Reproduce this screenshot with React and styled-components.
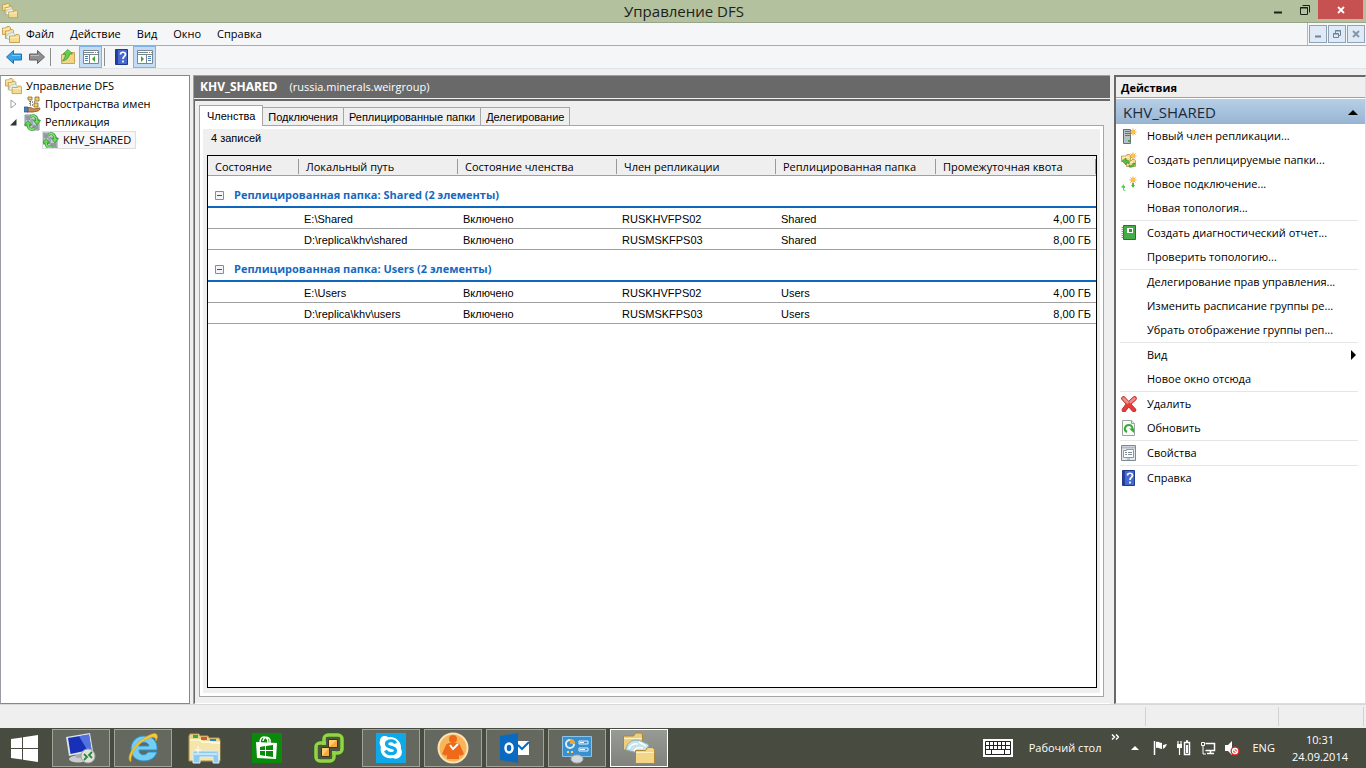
import React from 'react'
import styled, { createGlobalStyle, css } from 'styled-components';

const GlobalStyle = createGlobalStyle`
* {
  box-sizing: border-box;
}
body {
  margin: 0;
  background: #efefef;
  color: #000000;
  font-family: 'Open Sans', 'Noto Sans', sans-serif;
  font-size: 11px;
  line-height: 16px;
}
button {
  font: inherit;
  color: inherit;
  background: none;
  border: 0;
  padding: 0;
  margin: 0;
  text-align: left;
  white-space: nowrap;
}
a {
  color: inherit;
  text-decoration: none;
}
svg {
  display: block;
  flex: none;
}
`;
const Desktop = styled.div`
display: flex;
flex-direction: column;
min-height: 100vh;
`;

/* title bar */
const TitleBar = styled.header`
display: grid;
grid-template-columns: 1fr auto 1fr;
height: 23px;
padding-left: 2px;
background: #b3c19f;
border-bottom: 1px solid #98a48a;
`;
const TitleIcon = styled.div`
padding-top: 3px;
`;
const Title = styled.h1`
margin: 0;
font-size: 15px;
line-height: 22px;
font-weight: 400;
color: #1c2018;
`;
const WindowButtons = styled.div`
display: flex;
justify-content: flex-end;
padding-right: 3px;
`;
const WindowButton = styled.button`
display: flex;
justify-content: center;
align-items: center;
width: ${props => props.$close ? '45px' : '27px'};
height: 19px;
background: ${props => props.$close ? '#c75050' : 'transparent'};
`;

/* menu */
const MenuBar = styled.nav`
display: flex;
align-items: stretch;
height: 23px;
padding-left: 2px;
background: #f5f6f7;
border-bottom: 1px solid #a9abb0;
`;
const MenuIcon = styled.div`
padding: 3px 6px 0 0;
`;
const MenuItems = styled.div`
display: flex;
flex: 1;
gap: 16px;
border-right: 1px solid #b4b6ba;
`;
const ChildButtons = styled.div`
display: flex;
gap: 1px;
padding: 2px 1px;
`;
const ChildButton = styled.button`
display: flex;
align-items: center;
justify-content: center;
width: 18px;
height: 18px;
background: #dfeaf6;
border: 1px solid #8fa3b8;
`;

/* toolbar */
const ToolBar = styled.div`
display: flex;
align-items: center;
height: 23px;
padding-left: 2px;
background: #f5f6f7;
border-bottom: 1px solid #e3e4e6;
`;
const ToolButton = styled.button`
display: flex;
align-items: center;
justify-content: center;
width: 23px;
height: 22px;
background: ${props => props.$on ? '#c4dcf3' : 'transparent'};
border: 1px solid ${props => props.$on ? '#7eb4ea' : 'transparent'};
`;
const ToolSeparator = styled.div`
width: 1px;
height: 18px;
margin: 0 5px 0 2px;
background: #8e8e8e;
`;

/* panels */
const Panels = styled.main`
display: grid;
grid-template-columns: 190px minmax(0, 1fr) 252px;
gap: 3px;
flex: 1;
padding-top: 6px;
`;
const TreePane = styled.aside`
padding: 1px 0 0 4px;
background: #ffffff;
border: 1px solid #828790;
border-left-color: #9a9da3;
`;
const TreeRow = styled.div`
display: flex;
align-items: center;
height: 18px;
padding-left: ${props => props.$indent || '0'};
`;
const Expander = styled.button`
display: flex;
align-items: center;
width: 19px;
height: 18px;
padding-left: 5px;
`;
const TreeLabel = styled.button`
display: flex;
align-items: center;
gap: 4px;
height: 18px;
padding-right: 5px;
${props => props.$selected && css`
  background: #f7f7f7;
  outline: 1px solid #dedede;
  outline-offset: -1px;
`}
`;

const Center = styled.section`
display: flex;
flex-direction: column;
min-width: 0;
margin-right: 1px;
border-left: 1px solid #a0a0a0;
`;
const CenterHead = styled.div`
display: flex;
align-items: center;
gap: 12px;
height: 23px;
padding-left: 6px;
background: #696969;
border-top: 1px solid #a0a0a0;
color: #ffffff;
& > b {
  font-size: 12px;
}
`;
const CenterBody = styled.div`
display: flex;
flex-direction: column;
flex: 1;
margin-top: 1px;
padding: 4px 6px 6px 4px;
border-top: 2px solid #696969;
border-left: 1px solid #696969;
border-bottom: 1px solid #ffffff;
`;
const Tabs = styled.div`
display: flex;
align-items: flex-end;
height: 20px;
font-family: 'Liberation Sans', Arial, sans-serif;
`;
const Tab = styled.button`
position: relative;
height: ${props => props.$active ? '21px' : '18px'};
padding: 0 ${props => props.$active ? '7px' : '5px'};
border: 1px solid #a6a6a6;
border-bottom: 0;
background: ${props => props.$active ? '#ffffff' : '#efefef'};
margin: 0 0 ${props => props.$active ? '-1px' : '0'} ${props => props.$next ? '-1px' : '0'};
`;
const TabPanel = styled.div`
display: flex;
flex-direction: column;
flex: 1;
padding: 4px 4px 6px 4px;
border: 1px solid #a6a6a6;
box-shadow: inset 0 0 0 3px #ffffff;
background: #efefef;
`;
const Count = styled.div`
height: 25px;
padding-left: 7px;
font-family: 'Liberation Sans', Arial, sans-serif;
`;
const ListBox = styled.div`
flex: 1;
margin: 0 2px 2px 3px;
border: 1px solid #000000;
background: #ffffff;
`;
const Table = styled.table`
width: 100%;
table-layout: fixed;
border-collapse: separate;
border-spacing: 0;
`;
const HeadCell = styled.th`
width: ${props => props.$width || 'auto'};
height: 20px;
padding: 2px 0 0;
background: #efefef;
border-bottom: 1px solid #a0a0a0;
text-align: left;
font-weight: 400;
white-space: nowrap;
& > span {
  display: block;
  line-height: 15px;
  padding-left: 7px;
  border-right: 1px solid #9a9a9a;
}
`;
const GroupCell = styled.th`
height: 32px;
padding: 8px 0 0 7px;
border-bottom: 2px solid #0f66bd;
text-align: left;
font-weight: 700;
color: #1569bf;
`;
const GroupToggle = styled.button`
display: flex;
align-items: center;
gap: 10px;
`;
const Cell = styled.td`
height: 21px;
padding: 2px 5px 0;
border-bottom: 1px solid #a0a0a0;
font-family: 'Liberation Sans', Arial, sans-serif;
text-align: ${props => props.$right ? 'right' : 'left'};
`;

const ActionsPane = styled.aside`
background: #ffffff;
border: 1px solid #a0a0a0;
border-width: 2px 1px 1px 2px;
border-color: #696969 #dcdcdc #dcdcdc #696969;
`;
const ActionsTitle = styled.h2`
margin: 0 0 1px;
height: 21px;
padding-left: 5px;
background: #efefef;
border-bottom: 1px solid #a0a0a0;
font-size: 11px;
line-height: 21px;
font-weight: 700;
`;
const ActionsGroup = styled.button`
display: flex;
align-items: center;
justify-content: space-between;
width: 100%;
height: 25px;
padding: 0 7px;
background: linear-gradient(#b7cfe8, #98b4d3);
font-size: 15px;
color: #1b2a3b;
`;
const ActionList = styled.div`
padding: 0 7px 0 4px;
`;
const Action = styled.button`
display: grid;
grid-template-columns: 16px 1fr auto;
gap: 10px;
align-items: center;
width: 100%;
height: 24px;
padding-left: 1px;
`;
const ActionSeparator = styled.hr`
height: 1px;
margin: 0;
border: 0;
background: #e6e6e6;
`;

const StatusBar = styled.footer`
display: flex;
justify-content: flex-end;
height: 24px;
padding: 2px 2px 2px 0;
border-top: 1px solid #d8d8d8;
background: #efefef;
`;
const StatusCell = styled.div`
width: ${props => props.$width};
border-right: 1px solid #d2d2d2;
`;

/* task bar */
const TaskBar = styled.nav`
display: flex;
align-items: stretch;
height: 40px;
background: #474b40;
color: #ffffff;
`;
const StartButton = styled.button`
width: 52px;
padding-left: 11px;
`;
const TaskButtons = styled.div`
display: flex;
gap: 4px;
flex: 1;
padding: 1px 0;
`;
const TaskButton = styled.button`
display: flex;
align-items: center;
justify-content: center;
width: 58px;
border: 1px solid transparent;
${props => props.$running && css`
  background: #65685e;
  border-color: #a0a398;
`}
${props => props.$active && css`
  background: linear-gradient(#989a95, #80837c);
  border-color: #ffffff;
`}
`;
const Tray = styled.div`
display: flex;
align-items: center;
padding-right: 18px;
`;
const DesktopLink = styled.a`
margin: 0 10px 0 16px;
`;
const More = styled.button`
align-self: flex-start;
padding: 6px 12px 0 0;
`;
const TrayIcons = styled.div`
display: flex;
align-items: center;
gap: 8px;
margin: 0 12px 0 13px;
`;
const Clock = styled.time`
margin-left: 17px;
text-align: center;
line-height: 17px;
`;

/* icons */
const Folder = ({ x, y, w = 9, h = 7 }) => (
  <g transform={`translate(${x} ${y})`}>
    <path d={`M.5 2V${h}.5H${w}.5V1.5L${w - 0.5} .5H${w - 3}L${w - 4} 2z`} fill="#f5db8f" stroke="#b9923f" strokeWidth=".8" />
    <path d={`M1.200 3.200H${w - 0.3}`} stroke="#fff3c8" />
  </g>
);
const DfsIcon = ({ size = 16 }) => (
  <svg width={size} height={size} viewBox="0 0 18 18">
    <Folder x={0} y={0} w={8} h={8} />
    <Folder x={3} y={3} w={8} h={9} />
    <path d="M4 12c1-4 4-6 8-5l1 2-5 5z" fill="#e6f1f2" stroke="#9dbcc2" strokeWidth=".7" />
    <Folder x={7} y={8} w={10} h={8} />
  </svg>
);
const NamespaceIcon = () => (
  <svg width="17" height="17" viewBox="0 0 17 17">
    <path d="M6 3v6h5M6 6h5" fill="none" stroke="#222" strokeDasharray="1 1" />
    <path d="M4 1h4v3H4zM11 1h4v4h-4zM10 7h4v4h-4z" fill="#f0cc6c" stroke="#8e6a20" strokeWidth=".8" />
    <path d="M3 12c3-1 5 0 7 1l5-1c2 0 1 2-1 3l-5 1H3z" fill="#d08a54" stroke="#8b4a1e" strokeWidth=".8" />
    <path d="M0 11h4v5H0z" fill="#4384b8" stroke="#24587f" strokeWidth=".7" />
  </svg>
);
const ReplicationIcon = () => (
  <svg width="17" height="17" viewBox="0 0 17 17">
    <path d="M1 1h6v11H1zM8 5h7v11H8z" fill="#c3ccd1" stroke="#6c7a83" strokeWidth=".8" />
    <path d="M2 3h4M2 5h4M9 12h5M9 14h5" stroke="#5d6a73" />
    <path d="M6.500 2.500c4-2 6.500 0 6.500 5" fill="none" stroke="#2a8b2c" strokeWidth="3" />
    <path d="M9.500 6.500h7L13 11z" fill="#66d855" stroke="#2a8b2c" strokeWidth=".7" />
    <path d="M6.500 2.500c4-2 6.500 0 6.500 5" fill="none" stroke="#7be56a" strokeWidth="1.700" />
    <path d="M10.500 14.500c-4 2-6.500 0-6.500-4" fill="none" stroke="#2a8b2c" strokeWidth="3" />
    <path d="M.500 11h7L4 6.500z" fill="#66d855" stroke="#2a8b2c" strokeWidth=".7" />
    <path d="M10.500 14.500c-4 2-6.500 0-6.500-4" fill="none" stroke="#7be56a" strokeWidth="1.700" />
  </svg>
);
const Star = ({ x = 12, y = 4 }) => (
  <g transform={`translate(${x} ${y})`} stroke="#eba437">
    <path d="M0-3.500v7M-3.500 0h7M-2.500-2.500l5 5M2.500-2.500l-5 5" />
    <circle r="1.800" fill="#ffc23c" stroke="none" />
  </g>
);
const HelpIcon = () => (
  <svg width="16" height="16" viewBox="0 0 16 16">
    <path d="M1.500.5h12v15h-12z" fill="#4668cf" stroke="#20398f" />
    <path d="M2 1h2v14H2z" fill="#243f9f" />
    <path d="M6.500 5.500c0-3 5-3 5 0 0 2-2.500 2-2.500 4.500M9 11.500v2" fill="none" stroke="#fff" strokeWidth="1.700" />
  </svg>
);
const ConsoleIcon = ({ right }) => (
  <svg width="16" height="14" viewBox="0 0 16 14">
    <path d="M.5.5h15v13H.5z" fill="#fff" stroke="#7a8791" />
    <path d="M1 2.500h14" stroke="#7a8791" />
    <path d="M1 4.500h14" stroke="#7a8791" />
    <path d="M11 2.500h1M13 2.500h1" stroke="#fff" />
    <path d={right ? 'M9.500 5v8' : 'M6.500 5v8'} stroke="#7a8791" />
    <path d={right ? 'M11 6.500h3M11 8.500h3M11 10.500h3' : 'M2 6.500h3M2 8.500h3M2 10.500h3'} stroke="#4d7eb0" />
    <path d={right ? 'M4 6v6l3-3z' : 'M12 6v6L9 9z'} fill="#39a52f" />
  </svg>
);
const ArrowIcon = ({ color, edge, flip }) => (
  <svg width="16" height="14" viewBox="0 0 16 14">
    <path d={flip ? 'M15.500 7L8.500 .5v3.500H.5v6h8v3.500z' : 'M.5 7L7.500 .5v3.500h8v6h-8v3.500z'} fill={color} stroke={edge} strokeLinejoin="round" />
    <path d={flip ? 'M1.500 5.500H10' : 'M6 5.500h8.500'} stroke="#fff" strokeOpacity=".4" />
  </svg>
);
const UpIcon = () => (
  <svg width="16" height="16" viewBox="0 0 16 16">
    <path d="M1.500 5.500v9h13V3.500h-5l-1 2z" fill="#f3d586" stroke="#c8a455" />
    <path d="M2.500 12C4 10 5.500 8 5.500 5H3L8 .5 12.500 5H9.500C9 9 6.500 11 2.500 12z" fill="#63cf4d" stroke="#3b9c33" strokeWidth=".8" />
  </svg>
);
const ServerNewIcon = () => (
  <svg width="16" height="16" viewBox="0 0 16 16">
    <path d="M2.500 1.500h7v14h-7z" fill="#b6c0c7" stroke="#65727b" />
    <path d="M2 15V2l1-1v14z" fill="#5d6a73" />
    <path d="M4 3.500h5M4 5.500h5M4 7.500h5" stroke="#6b7780" />
    <path d="M7 13h2" stroke="#37b52c" strokeWidth="2" />
    <Star x={12} y={4} />
  </svg>
);
const FoldersNewIcon = () => (
  <svg width="16" height="16" viewBox="0 0 16 16">
    <Folder x={0} y={2} w={9} h={7} />
    <Folder x={5} y={7} w={9} h={7} />
    <path d="M1 9l4-3v2c3 0 4 2 3 4-1-1-2-1-3-1v2zM8 13c2 1 4 0 4-2h2c0 3-3 5-6 4z" fill="#55bd42" stroke="#2b8a2b" strokeWidth=".5" />
    <Star x={12} y={4} />
  </svg>
);
const ConnectNewIcon = () => (
  <svg width="16" height="16" viewBox="0 0 16 16">
    <path d="M0 11l3-3v2h1v2H3v1c0 1 1 1 2 2-3 0-3-1-3-3z" fill="#5dcc4c" />
    <path d="M11 7h2v2h1l-2 3-2-3h1z" fill="#4dbd41" />
    <Star x={12} y={4} />
  </svg>
);
const ReportIcon = () => (
  <svg width="16" height="16" viewBox="0 0 16 16">
    <path d="M2.500.5h12v14h-12z" fill="#44ad46" stroke="#23752a" />
    <path d="M6 3h6v5H6z" fill="#fff" />
    <path d="M8 4h3v3H8z" fill="#329436" />
    <path d="M.5 2.500h3M.5 4.500h3M.5 6.500h3M.5 8.500h3M.5 10.500h3M.5 12.500h3" stroke="#737373" strokeWidth=".8" />
  </svg>
);
const DeleteIcon = () => (
  <svg width="16" height="16" viewBox="0 0 16 16">
    <path d="M2.500 2.500C6 6 9 10 13 14M13.500 2.500C9 6 6 9 3 14" fill="none" stroke="#b52626" strokeWidth="4.500" strokeLinecap="round" />
    <path d="M2.500 2.500C6 6 9 10 13 14M13.500 2.500C9 6 6 9 3 14" fill="none" stroke="#e23b3b" strokeWidth="3.500" strokeLinecap="round" />
    <path d="M2.500 2.500L6.500 6.500M13.500 2.500L9.500 6" stroke="#f08f8c" strokeWidth="2.500" strokeLinecap="round" />
  </svg>
);
const RefreshIcon = () => (
  <svg width="16" height="16" viewBox="0 0 16 16">
    <path d="M1.500.5h9l3 3v12h-12z" fill="#fafcfa" stroke="#9aa69c" />
    <path d="M10.500.5v3h3" fill="#dfe6e0" stroke="#9aa69c" />
    <path d="M6 12c-4-2-2-7 2-7 3 0 4 3 3 5" fill="none" stroke="#3ba83a" strokeWidth="2" />
    <path d="M8 8.500h5V13z" fill="#3ba83a" />
  </svg>
);
const PropertiesIcon = () => (
  <svg width="16" height="16" viewBox="0 0 16 16">
    <path d="M.5.5h14v15H.5z" fill="#e5eaef" stroke="#7d8993" />
    <path d="M1 2.500h13" stroke="#b0bac4" strokeWidth="2" />
    <path d="M2.500 5.500h3v-1h7v8h-10z" fill="#fff" stroke="#8c99a4" />
    <path d="M4 7.500h2M7 7.500h4M4 9.500h2M7 9.500h4" stroke="#7d8993" />
    <path d="M6 14h3" stroke="#40bad8" />
  </svg>
);

const RemoteIcon = () => (
  <svg width="32" height="32" viewBox="0 0 32 32">
    <ellipse cx="13" cy="27" rx="9" ry="3.500" fill="#c9cdcf" />
    <path d="M10 21l8-1 2 6h-9z" fill="#a6acb0" />
    <path d="M1 5l24-4 3 18-24 5z" fill="#dce3ea" />
    <path d="M3 6l21-3.500 2.500 15L5.500 22z" fill="#1730b8" />
    <path d="M14 4.200l10-1.700 2.500 15-4 .8z" fill="#6f8ff0" opacity=".7" />
    <circle cx="23" cy="24" r="7" fill="#dfe2df" stroke="#9fa39e" />
    <path d="M19 22l3 3-3 3M27 20l-3 3 3 3" fill="none" stroke="#2a8b34" strokeWidth="1.800" />
  </svg>
);
const ExplorerEIcon = () => (
  <svg width="32" height="32" viewBox="0 0 32 32">
    <path d="M21 20h9c-2 6-7 9-13 9C9 29 4 24 4 17S9 4 17 4c9 0 14 6 13 14H12c0 6 7 6 9 2zM12 14h10c-1-5-9-5-10 0z" fill="#74cef4" stroke="#2993cf" />
    <path d="M4 30c-5-3 0-13 8-20S29-1 30 3c1 2 0 4-1 6 0-3-2-5-6-3C13 9 3 20 4 30z" fill="#f6c93c" stroke="#d59a1a" strokeWidth=".6" />
  </svg>
);
const FilesIcon = () => (
  <svg width="34" height="32" viewBox="0 0 34 32">
    <path d="M1 4l1-2h9l1 2h8l1 2h10l1 2v21H1z" fill="#ead489" stroke="#b99b4c" />
    <path d="M2 9h30v19H2z" fill="#f6e5aa" />
    <path d="M2 8h11l1 2h9l1 1h8" fill="none" stroke="#fffbe2" strokeWidth="1.500" />
    <path d="M5 3h5v3H5z" fill="#35a847" /><path d="M13 5h6v3h-6z" fill="#d8533e" /><path d="M22 7h6v2h-6z" fill="#3682c8" />
    <path d="M5 19h25l1 12h-6v-6H12v6H5z" fill="#8fc9ec" stroke="#d8effb" />
    <path d="M6 22h23" stroke="#d5effb" strokeWidth="1.500" />
    <path d="M10 14v7M7 18h6" stroke="#fff" />
  </svg>
);
const StoreIcon = () => (
  <svg width="30" height="30" viewBox="0 0 30 30">
    <path d="M0 0h30v30H0z" fill="#0a8a0a" />
    <path d="M8 10c0-8 8-8 8 0M11 8c1-6 8-4 7 2" fill="none" stroke="#fff" strokeWidth="1.500" />
    <path d="M4 9l21 1-1 16-19-1z" fill="#fff" />
    <path d="M8 14l5-1v4H8zM14 13l7-1v5h-7zM8 18h5v5l-5-1zM14 18h7v6l-7-1z" fill="#0a8a0a" />
  </svg>
);
const VmwareIcon = () => (
  <svg width="32" height="32" viewBox="0 0 32 32">
    <g fill="none" stroke="#2f5f17" strokeWidth="5">
      <rect x="11" y="3" width="18" height="18" rx="4" />
      <rect x="3" y="11" width="18" height="18" rx="4" />
    </g>
    <g fill="none" stroke="#93d446" strokeWidth="3.500">
      <rect x="11" y="3" width="18" height="18" rx="4" />
      <rect x="3" y="11" width="18" height="18" rx="4" />
    </g>
    <path d="M13 5h14v14H13zM5 13h14v14H5z" fill="#4c5443" />
    <path d="M15.500 7.500h9v8h-9zM8.500 15.500h8v9h-8z" fill="#f7ab35" stroke="#4a3210" />
    <path d="M16 8h8L16 15zM9 16h7l-7 8z" fill="#ffce70" />
  </svg>
);
const SkypeIcon = () => (
  <svg width="30" height="30" viewBox="0 0 30 30">
    <path d="M0 0h30v30H0z" fill="#10a9e8" />
    <path d="M4 8c0-5 5-6 8-4 8-1 14 5 13 12 3 5-2 12-8 9C9 27 3 20 5 14 4 12 3 10 4 8z" fill="#fff" />
    <path d="M19.500 10.500c-1-4-9-3.500-9 .5 0 4.500 9 2 9 6.500 0 4-8 4.500-10 0" fill="none" stroke="#10a9e8" strokeWidth="3.200" />
  </svg>
);
const PersonIcon = () => (
  <svg width="32" height="32" viewBox="0 0 32 32">
    <circle cx="16" cy="16" r="14.500" fill="#f8b559" stroke="#fbe3b4" strokeWidth="2" />
    <circle cx="16" cy="7" r="4" fill="#ee6a18" />
    <path d="M5 22l4-9c1-3 13-3 14 0l4 9-4 2-1-2v5H10v-5l-1 2z" fill="#ee6a18" />
    <path d="M13 13l3 4 5-5" fill="none" stroke="#fff" strokeWidth="2" />
  </svg>
);
const OutlookIcon = () => (
  <svg width="32" height="32" viewBox="0 0 32 32">
    <path d="M1 4l18-3v30L1 28z" fill="#0a6ac2" />
    <ellipse cx="10" cy="16" rx="3.500" ry="4.500" fill="none" stroke="#fff" strokeWidth="2.500" />
    <path d="M19 9h11v14H19z" fill="#fff" />
    <path d="M19 13l4 4 7-7" fill="none" stroke="#0a6ac2" strokeWidth="2" />
  </svg>
);
const ControlIcon = () => (
  <svg width="32" height="32" viewBox="0 0 32 32">
    <path d="M1.500 4.500h29v20h-29z" fill="#3a8fce" stroke="#8bc4e8" />
    <circle cx="9" cy="12" r="4" fill="none" stroke="#d8effb" strokeWidth="2" />
    <path d="M9 12V7c3 0 5 2 5 5z" fill="#f5a52f" />
    <path d="M18 9h9v3h-9zM18 16h9v3h-9z" fill="none" stroke="#e8f5fc" />
    <path d="M19 10.500h4M19 17.500h5" stroke="#fff" />
    <path d="M6 20h2M10 20h2" stroke="#ffd35a" strokeWidth="2" />
    <ellipse cx="16" cy="27" rx="6" ry="4" fill="#d5d8da" stroke="#a9adb0" />
  </svg>
);
const BigDfsIcon = () => (
  <svg width="34" height="34" viewBox="0 0 34 34">
    <path d="M1.500 19V5h10l2-3h6l1 2v15z" fill="#eccf7e" stroke="#aa8638" />
    <path d="M2 7.500h18" stroke="#fff0bd" />
    <path d="M4 19c0-5 4-10 10-10 5 0 8 3 12 4l2 6-12 3z" fill="#c5e3e9" stroke="#83adba" />
    <path d="M7 18c1-4 5-6 9-5M12 20c1-3 5-4 9-3M17 11l7 4" fill="none" stroke="#fff" strokeWidth="1.500" />
    <path d="M13.500 32.500V19.500h10l2-3h5l2 2v14z" fill="#f2d587" stroke="#aa8638" />
    <path d="M14 21.500h18" stroke="#fff0bd" />
  </svg>
);

const actionGroups = [
  [
    { label: 'Новый член репликации...', icon: <ServerNewIcon /> },
    { label: 'Создать реплицируемые папки...', icon: <FoldersNewIcon /> },
    { label: 'Новое подключение...', icon: <ConnectNewIcon /> },
    { label: 'Новая топология...' },
  ],
  [
    { label: 'Создать диагностический отчет...', icon: <ReportIcon /> },
    { label: 'Проверить топологию...' },
  ],
  [
    { label: 'Делегирование прав управления...' },
    { label: 'Изменить расписание группы ре...' },
    { label: 'Убрать отображение группы реп...' },
  ],
  [
    { label: 'Вид', more: true },
    { label: 'Новое окно отсюда' },
  ],
  [
    { label: 'Удалить', icon: <DeleteIcon /> },
    { label: 'Обновить', icon: <RefreshIcon /> },
  ],
  [{ label: 'Свойства', icon: <PropertiesIcon /> }],
  [{ label: 'Справка', icon: <HelpIcon /> }],
];
const columns = [
  { label: 'Состояние', width: '91px' },
  { label: 'Локальный путь', width: '159px' },
  { label: 'Состояние членства', width: '159px' },
  { label: 'Член репликации', width: '159px' },
  { label: 'Реплицированная папка', width: '160px' },
  { label: 'Промежуточная квота' },
];
const groups = [
  {
    name: 'Shared',
    rows: [
      ['', 'E:\\Shared', 'Включено', 'RUSKHVFPS02', 'Shared', '4,00 ГБ'],
      ['', 'D:\\replica\\khv\\shared', 'Включено', 'RUSMSKFPS03', 'Shared', '8,00 ГБ'],
    ],
  },
  {
    name: 'Users',
    rows: [
      ['', 'E:\\Users', 'Включено', 'RUSKHVFPS02', 'Users', '4,00 ГБ'],
      ['', 'D:\\replica\\khv\\users', 'Включено', 'RUSMSKFPS03', 'Users', '8,00 ГБ'],
    ],
  },
];
const tasks = [
  { name: 'Удаленный рабочий стол', icon: <RemoteIcon />, running: true },
  { name: 'Internet Explorer', icon: <ExplorerEIcon />, running: true },
  { name: 'Проводник', icon: <FilesIcon /> },
  { name: 'Магазин', icon: <StoreIcon /> },
  { name: 'VMware', icon: <VmwareIcon /> },
  { name: 'Skype', icon: <SkypeIcon />, running: true },
  { name: 'Контакты', icon: <PersonIcon />, running: true },
  { name: 'Outlook', icon: <OutlookIcon />, running: true },
  { name: 'Панель управления', icon: <ControlIcon />, running: true },
  { name: 'Управление DFS', icon: <BigDfsIcon />, running: true, active: true },
];

const App = () => {
  return (
    <Desktop>
      <GlobalStyle />
      <TitleBar>
        <TitleIcon><DfsIcon /></TitleIcon>
        <Title>Управление DFS</Title>
        <WindowButtons>
          <WindowButton aria-label='Свернуть'>
            <svg width="8" height="8"><path d="M0 6.500h8" stroke="#1c2018" strokeWidth="2" /></svg>
          </WindowButton>
          <WindowButton aria-label='Восстановить'>
            <svg width="10" height="10"><path d="M.5 2.500h7v7h-7zM2.500.5h7v7" fill="none" stroke="#1c2018" /><path d="M0 3h8" stroke="#1c2018" /></svg>
          </WindowButton>
          <WindowButton $close aria-label='Закрыть'>
            <svg width="8" height="8"><path d="M1 1l6 6M7 1L1 7" stroke="#fff" strokeWidth="1.800" /></svg>
          </WindowButton>
        </WindowButtons>
      </TitleBar>
      <MenuBar>
        <MenuIcon><DfsIcon size={18} /></MenuIcon>
        <MenuItems>
          {['Файл', 'Действие', 'Вид', 'Окно', 'Справка'].map(item => <button key={item}>{item}</button>)}
        </MenuItems>
        <ChildButtons>
          <ChildButton aria-label='Свернуть окно'>
            <svg width="8" height="8"><path d="M1 6.500h6" stroke="#6f8297" strokeWidth="2" /></svg>
          </ChildButton>
          <ChildButton aria-label='Восстановить окно'>
            <svg width="8" height="8"><path d="M.5 3.500h5v4h-5zM2.500 3V.5h5v5H6" fill="none" stroke="#6f8297" /><path d="M0 4h6M2 1h6" stroke="#6f8297" /></svg>
          </ChildButton>
          <ChildButton aria-label='Закрыть окно'>
            <svg width="8" height="8"><path d="M1 1l6 6M7 1L1 7" stroke="#8796a6" strokeWidth="2" /></svg>
          </ChildButton>
        </ChildButtons>
      </MenuBar>
      <ToolBar>
        <ToolButton aria-label='Назад'><ArrowIcon color='#39a5e6' edge='#1873ad' /></ToolButton>
        <ToolButton aria-label='Вперед'><ArrowIcon color='#909090' edge='#606060' flip /></ToolButton>
        <ToolSeparator />
        <ToolButton aria-label='Вверх'><UpIcon /></ToolButton>
        <ToolButton $on aria-label='Дерево консоли'><ConsoleIcon /></ToolButton>
        <ToolSeparator />
        <ToolButton aria-label='Вызов справки'><HelpIcon /></ToolButton>
        <ToolButton $on aria-label='Панель действий'><ConsoleIcon right /></ToolButton>
      </ToolBar>
      <Panels>
        <TreePane>
          <TreeRow><TreeLabel><DfsIcon size={17} />Управление DFS</TreeLabel></TreeRow>
          <TreeRow>
            <Expander aria-label='Развернуть'>
              <svg width="7" height="10"><path d="M1 1l5 4-5 4z" fill="#fff" stroke="#a0a0a0" /></svg>
            </Expander>
            <TreeLabel><NamespaceIcon />Пространства имен</TreeLabel>
          </TreeRow>
          <TreeRow>
            <Expander aria-label='Свернуть'>
              <svg width="7" height="7"><path d="M6.500 0v6.500H0z" fill="#333" /></svg>
            </Expander>
            <TreeLabel><ReplicationIcon />Репликация</TreeLabel>
          </TreeRow>
          <TreeRow $indent='37px'><TreeLabel $selected><ReplicationIcon />KHV_SHARED</TreeLabel></TreeRow>
        </TreePane>
        <Center>
          <CenterHead><b>KHV_SHARED</b><span>(russia.minerals.weirgroup)</span></CenterHead>
          <CenterBody>
            <Tabs role='tablist'>
              <Tab role='tab' $active>Членства</Tab>
              <Tab role='tab' $next>Подключения</Tab>
              <Tab role='tab' $next>Реплицированные папки</Tab>
              <Tab role='tab' $next>Делегирование</Tab>
            </Tabs>
            <TabPanel role='tabpanel'>
              <Count>4 записей</Count>
              <ListBox>
                <Table>
                  <thead>
                    <tr>
                      {columns.map(col => (
                        <HeadCell key={col.label} $width={col.width}><span>{col.label}</span></HeadCell>
                      ))}
                    </tr>
                  </thead>
                  {groups.map(group => (
                    <tbody key={group.name}>
                      <tr>
                        <GroupCell colSpan={6}>
                          <GroupToggle>
                            <svg width="9" height="9"><path d="M.5.5h8v8h-8z" fill="#f4f4f8" stroke="#8c8c8c" /><path d="M2 4.500h5" stroke="#37509c" /></svg>
                            Реплицированная папка: {group.name} (2 элементы)
                          </GroupToggle>
                        </GroupCell>
                      </tr>
                      {group.rows.map(row => (
                        <tr key={row[1]}>
                          {row.map((text, i) => <Cell key={i} $right={i === 5}>{text}</Cell>)}
                        </tr>
                      ))}
                    </tbody>
                  ))}
                </Table>
              </ListBox>
            </TabPanel>
          </CenterBody>
        </Center>
        <ActionsPane>
          <ActionsTitle>Действия</ActionsTitle>
          <ActionsGroup>
            KHV_SHARED
            <svg width="10" height="6"><path d="M0 6l5-5 5 5z" fill="#000" /></svg>
          </ActionsGroup>
          <ActionList>
            {actionGroups.map((group, i) => (
              <React.Fragment key={i}>
                {i > 0 && <ActionSeparator />}
                {group.map(action => (
                  <Action key={action.label}>
                    <span>{action.icon}</span>
                    <span>{action.label}</span>
                    {action.more && <svg width="8" height="10"><path d="M1 0l5 5-5 5z" fill="#000" /></svg>}
                  </Action>
                ))}
              </React.Fragment>
            ))}
          </ActionList>
        </ActionsPane>
      </Panels>
      <StatusBar>
        <StatusCell $width='133px' />
        <StatusCell $width='133px' />
        <StatusCell $width='85px' />
      </StatusBar>
      <TaskBar>
        <StartButton aria-label='Пуск'>
          <svg width="27" height="27" viewBox="0 0 27 27">
            <path d="M0 4l11-1.500V13H0zM12 2.300L27 0v13H12zM0 14h11v10.500L0 23zM12 14h15v13l-15-2.300z" fill="#fff" />
          </svg>
        </StartButton>
        <TaskButtons>
          {tasks.map(task => (
            <TaskButton key={task.name} aria-label={task.name} $running={task.running} $active={task.active}>{task.icon}</TaskButton>
          ))}
        </TaskButtons>
        <Tray>
          <svg width="30" height="18" viewBox="0 0 30 18">
            <path d="M0 0h30v18H0z" fill="#fff" />
            <path d="M2.500 2.500h25v13h-25z" fill="none" stroke="#222" />
            <path d="M3 6.500h24M3 10.500h24M6.500 3v8M10.500 3v8M14.500 3v8M18.500 3v8M22.500 3v8M8.500 11v4M21.500 11v4" stroke="#222" />
          </svg>
          <DesktopLink href='#'>Рабочий стол</DesktopLink>
          <More aria-label='Еще'>
            <svg width="8" height="6"><path d="M1 .5L3.500 3 1 5.500M5 .5L7.500 3 5 5.500" fill="none" stroke="#fff" strokeWidth="1.500" /></svg>
          </More>
          <svg width="8" height="4"><path d="M0 4l4-4 4 4z" fill="#fff" /></svg>
          <TrayIcons>
            <svg width="16" height="16" viewBox="0 0 16 16">
              <path d="M2.500 1v14" stroke="#fff" strokeWidth="1.500" /><path d="M4 2c3-1 4 1 6 1v6C8 9 7 7 4 8zM11 5c2 0 2-1 4-1-1 2-1 3-4 5z" fill="#fff" />
            </svg>
            <svg width="16" height="16" viewBox="0 0 16 16">
              <path d="M2 1v3M5 1v3M3.500 8v7" stroke="#fff" strokeWidth="1.200" /><path d="M1 4h5v4H1z" fill="#fff" />
              <path d="M8.500 2.500h5v12h-5zM10 1h2" fill="none" stroke="#fff" strokeWidth="1.500" /><path d="M10 5h2v8h-2z" fill="#fff" />
            </svg>
            <svg width="16" height="16" viewBox="0 0 16 16">
              <path d="M5.500 3.500h9v7h-9M7 13.500h7M10.500 11v2" fill="none" stroke="#fff" strokeWidth="1.500" />
              <path d="M1.500 2.500h3v3h-3zM3 6v8h3" fill="none" stroke="#fff" />
            </svg>
            <svg width="16" height="16" viewBox="0 0 16 16">
              <path d="M1 5h3l4-4v14l-4-4H1z" fill="#fff" />
              <circle cx="11" cy="11" r="4.500" fill="#d92c2c" /><circle cx="11" cy="11" r="2.500" fill="none" stroke="#fff" strokeWidth="1.300" /><path d="M9 9l4 4" stroke="#fff" strokeWidth="1.300" />
            </svg>
          </TrayIcons>
          <span>ENG</span>
          <Clock>10:31<br />24.09.2014</Clock>
        </Tray>
      </TaskBar>
    </Desktop>
  )
}

export default App
